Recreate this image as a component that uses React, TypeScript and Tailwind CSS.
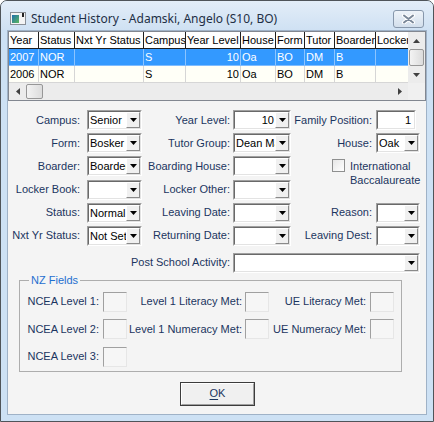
import React from "react";

// Student History dialog (Windows 7 basic look)

const GRID_COLS = [
    { key: "year", title: "Year", w: "w-[30px]" },
    { key: "status", title: "Status", w: "w-[36px]" },
    { key: "nxt", title: "Nxt Yr Status", w: "w-[69px]" },
    { key: "campus", title: "Campus", w: "w-[42px]" },
    { key: "level", title: "Year Level", w: "w-[55px]", right: true },
    { key: "house", title: "House", w: "w-[35px]" },
    { key: "form", title: "Form", w: "w-[29px]" },
    { key: "tutor", title: "Tutor", w: "w-[30px]" },
    { key: "boarder", title: "Boarder", w: "w-[41px]" },
    { key: "locker", title: "Locker", w: "w-[40px]" },
];

type Row = Record<string, string>;

const ROWS: Row[] = [
    { year: "2007", status: "NOR", nxt: "", campus: "S", level: "10", house: "Oa", form: "BO", tutor: "DM", boarder: "B", locker: "" },
    { year: "2006", status: "NOR", nxt: "", campus: "S", level: "10", house: "Oa", form: "BO", tutor: "DM", boarder: "B", locker: "" },
];

function Tri({ dir, color = "#000" }: { dir: "up" | "down" | "left" | "right"; color?: string }) {
    if (dir === "down")
        return (
            <svg width="7" height="4" viewBox="0 0 7 4">
                <path d="M0 0h7L3.5 4z" fill={color} />
            </svg>
        );
    if (dir === "up")
        return (
            <svg width="7" height="4" viewBox="0 0 7 4">
                <path d="M0 4h7L3.5 0z" fill={color} />
            </svg>
        );
    if (dir === "left")
        return (
            <svg width="4" height="7" viewBox="0 0 4 7">
                <path d="M4 0v7L0 3.5z" fill={color} />
            </svg>
        );
    return (
        <svg width="4" height="7" viewBox="0 0 4 7">
            <path d="M0 0v7L4 3.5z" fill={color} />
        </svg>
    );
}

function Combo({ w, value = "", right = false }: { w: string; value?: string; right?: boolean }) {
    return (
        <div className={`flex h-[20px] shrink-0 border border-t-[#a0a0a0] border-l-[#a0a0a0] border-r-white border-b-white ${w}`}>
            <div className="flex min-w-0 flex-1 border border-t-[#696969] border-l-[#696969] border-r-[#e3e3e3] border-b-[#e3e3e3] bg-white">
                <span
                    className={`min-w-0 flex-1 overflow-hidden whitespace-nowrap pl-[1px] leading-[16px] text-black ${
                        right ? "pr-[1px] text-right" : ""
                    }`}
                >
                    {value}
                </span>
                <div className="flex w-[14px] shrink-0 items-center justify-center border border-t-white border-l-white border-r-[#8a8a8a] border-b-[#8a8a8a] bg-[#f0f0f0]">
                    <Tri dir="down" />
                </div>
            </div>
        </div>
    );
}

function TextBox({ w, value = "" }: { w: string; value?: string }) {
    return (
        <div className={`flex h-[20px] shrink-0 border border-t-[#a0a0a0] border-l-[#a0a0a0] border-r-white border-b-white ${w}`}>
            <div className="flex-1 border border-t-[#696969] border-l-[#696969] border-r-[#e3e3e3] border-b-[#e3e3e3] bg-white pr-[3px] text-right leading-[16px] text-black">
                {value}
            </div>
        </div>
    );
}

function SmallBox() {
    return <div className="ml-[4px] h-[20px] w-[24px] shrink-0 border border-t-[#a0a0a0] border-l-[#a0a0a0] border-r-[#e6e6e6] border-b-[#e6e6e6] bg-[#f6f6f6]" />;
}

function Label({ w, text }: { w: string; text: string }) {
    return <div className={`shrink-0 whitespace-nowrap text-right leading-[13px] text-[#1b3560] ${w}`}>{text}</div>;
}

function WindowIcon() {
    return (
        <svg width="16" height="13" viewBox="0 0 16 13">
            <defs>
                <linearGradient id="ig" x1="0" y1="0" x2="1" y2="1">
                    <stop offset="0" stopColor="#1f6fae" />
                    <stop offset="1" stopColor="#5cb85c" />
                </linearGradient>
            </defs>
            <rect x="0.5" y="0.5" width="15" height="12" fill="#f4f4f4" stroke="#8a8f96" />
            <rect x="2" y="3" width="7" height="8" fill="url(#ig)" />
            <rect x="12" y="1" width="2" height="4" fill="#222" />
        </svg>
    );
}

function CloseGlyph() {
    return (
        <svg width="13" height="10" viewBox="0 0 13 10">
            <path d="M2 1.5L11 8.5M11 1.5L2 8.5" stroke="#ffffff" strokeWidth="4" strokeLinecap="round" />
            <path d="M2 1.5L11 8.5M11 1.5L2 8.5" stroke="#7b8899" strokeWidth="2" strokeLinecap="round" />
        </svg>
    );
}

function Thumb({ className }: { className: string }) {
    return <div className={`rounded-[2px] border border-[#979797] bg-gradient-to-r from-[#f3f3f3] to-[#dcdcdc] ${className}`} />;
}

function HistoryGrid() {
    return (
        <div className="flex h-[70px] flex-col border border-[#828790] bg-[#fffff7] text-black">
            <div className="flex h-[51px]">
                <div className="min-w-0 flex-1 overflow-hidden">
                    {/* header */}
                    <div className="flex h-[17px] w-[420px] border-b border-[#1f1f1f] bg-white">
                        {GRID_COLS.map((c) => (
                            <div key={c.key} className={`shrink-0 overflow-hidden whitespace-nowrap border-r border-[#1f1f1f] pl-[1px] leading-[16px] ${c.w}`}>
                                {c.title}
                            </div>
                        ))}
                    </div>
                    {ROWS.map((r, i) => (
                        <div
                            key={r.year}
                            className={`flex h-[17px] w-[420px] border-b ${
                                i === 0 ? "border-[#7fbcff] bg-[#3399ff] text-white" : "border-[#d6d6d6] bg-[#fffff7]"
                            }`}
                        >
                            {GRID_COLS.map((c) => (
                                <div
                                    key={c.key}
                                    className={`shrink-0 overflow-hidden whitespace-nowrap border-r px-[1px] leading-[16px] ${c.w} ${
                                        i === 0 ? "border-[#8cc4ff]" : "border-[#d6d6d6]"
                                    } ${c.right ? "text-right" : ""}`}
                                >
                                    {r[c.key]}
                                </div>
                            ))}
                        </div>
                    ))}
                </div>
                {/* vertical scrollbar */}
                <div className="flex w-[17px] shrink-0 flex-col bg-[#ececec]">
                    <div className="flex h-[17px] items-center justify-center">
                        <Tri dir="up" color="#404040" />
                    </div>
                    <Thumb className="mx-[1px] h-[17px]" />
                    <div className="flex flex-1 items-center justify-center">
                        <Tri dir="down" color="#404040" />
                    </div>
                </div>
            </div>
            {/* horizontal scrollbar */}
            <div className="flex h-[17px] bg-[#ececec]">
                <div className="flex w-[17px] shrink-0 items-center justify-center">
                    <Tri dir="left" color="#404040" />
                </div>
                <Thumb className="my-[1px] w-[17px] bg-gradient-to-b" />
                <div className="flex-1" />
                <div className="flex w-[17px] shrink-0 items-center justify-center">
                    <Tri dir="right" color="#404040" />
                </div>
                <div className="w-[17px] shrink-0 bg-[#f0f0f0]" />
            </div>
        </div>
    );
}

export default function App() {
    return (
        <div className="flex h-[422px] w-[434px] flex-col overflow-hidden rounded-t-[7px] border border-[#4f5459] bg-[#cde1f4] font-['Liberation_Sans',Arial,sans-serif] text-[11px]">
            {/* title bar */}
            <div className="flex h-[29px] shrink-0 items-center bg-gradient-to-b from-[#e3edf8] to-[#cfe1f3] pl-[9px] pr-[9px] pt-[6px]">
                <WindowIcon />
                <span className="ml-[5px] flex-1 whitespace-nowrap font-['Noto_Sans',sans-serif] text-[12px] leading-[16px] text-[#1e2f45]">
                    Student History - Adamski, Angelo (S10, BO)
                </span>
                <div className="flex h-[18px] w-[31px] items-center justify-center rounded-[3px] border border-[#8797ab] bg-gradient-to-b from-[#eef3f9] to-[#d3dfec]">
                    <CloseGlyph />
                </div>
            </div>

            {/* client area */}
            <div className="mx-[6px] mb-[6px] flex flex-1 flex-col border border-[#9fb2c7] bg-[#f4f4f4]">
                <HistoryGrid />

                <div className="mt-[9px] flex flex-col gap-[3.2px]">
                    <div className="flex h-[20px] items-center">
                        <Label w="w-[72px]" text="Campus:" />
                        <div className="ml-[7px]"><Combo w="w-[55px]" value="Senior" /></div>
                        <Label w="w-[88px]" text="Year Level:" />
                        <div className="ml-[3px]"><Combo w="w-[58px]" value="10" right /></div>
                        <Label w="w-[81px]" text="Family Position:" />
                        <div className="ml-[4px]"><TextBox w="w-[40px]" value="1" /></div>
                    </div>
                    <div className="flex h-[20px] items-center">
                        <Label w="w-[72px]" text="Form:" />
                        <div className="ml-[7px]"><Combo w="w-[55px]" value="Bosker" /></div>
                        <Label w="w-[88px]" text="Tutor Group:" />
                        <div className="ml-[3px]"><Combo w="w-[58px]" value="Dean Ma" /></div>
                        <Label w="w-[81px]" text="House:" />
                        <div className="ml-[4px]"><Combo w="w-[44px]" value="Oak" /></div>
                    </div>
                    <div className="flex h-[20px] items-center">
                        <Label w="w-[72px]" text="Boarder:" />
                        <div className="ml-[7px]"><Combo w="w-[55px]" value="Boarder" /></div>
                        <Label w="w-[88px]" text="Boarding House:" />
                        <div className="ml-[3px]"><Combo w="w-[58px]" /></div>
                        <div className="ml-[41px] flex h-[20px] items-start self-start pt-[3px]">
                            <div className="h-[13px] w-[13px] shrink-0 border border-[#8e8f8f] bg-gradient-to-br from-[#e6e6e6] to-white" />
                            <div className="ml-[5px] whitespace-nowrap leading-[14px] text-[#1b3560]">
                                International
                                <br />
                                Baccalaureate
                            </div>
                        </div>
                    </div>
                    <div className="flex h-[20px] items-center">
                        <Label w="w-[72px]" text="Locker Book:" />
                        <div className="ml-[7px]"><Combo w="w-[55px]" /></div>
                        <Label w="w-[88px]" text="Locker Other:" />
                        <div className="ml-[3px]"><Combo w="w-[58px]" /></div>
                    </div>
                    <div className="flex h-[20px] items-center">
                        <Label w="w-[72px]" text="Status:" />
                        <div className="ml-[7px]"><Combo w="w-[55px]" value="Normal" /></div>
                        <Label w="w-[88px]" text="Leaving Date:" />
                        <div className="ml-[3px]"><Combo w="w-[58px]" /></div>
                        <Label w="w-[81px]" text="Reason:" />
                        <div className="ml-[4px]"><Combo w="w-[44px]" /></div>
                    </div>
                    <div className="flex h-[20px] items-center">
                        <Label w="w-[72px]" text="Nxt Yr Status:" />
                        <div className="ml-[7px]"><Combo w="w-[55px]" value="Not Set" /></div>
                        <Label w="w-[88px]" text="Returning Date:" />
                        <div className="ml-[3px]"><Combo w="w-[58px]" /></div>
                        <Label w="w-[81px]" text="Leaving Dest:" />
                        <div className="ml-[4px]"><Combo w="w-[44px]" /></div>
                    </div>
                </div>

                <div className="mt-[7px] flex h-[20px] items-center">
                    <Label w="w-[222px]" text="Post School Activity:" />
                    <div className="ml-[3px]"><Combo w="w-[187px]" /></div>
                </div>

                {/* NZ Fields group */}
                <div className="relative ml-[11px] mt-[7px] flex h-[92px] w-[383px] flex-col gap-[7.5px] border border-[#adadad] pt-[11px]">
                    <span className="absolute left-[9px] top-[-8px] bg-[#f4f4f4] px-[2px] leading-[14px] text-[#1f6fd0]">NZ Fields</span>
                    <div className="flex h-[20px] items-center">
                        <Label w="w-[79px]" text="NCEA Level 1:" />
                        <SmallBox />
                        <Label w="w-[115px]" text="Level 1 Literacy Met:" />
                        <div className="-ml-[1px]"><SmallBox /></div>
                        <Label w="w-[97px]" text="UE Literacy Met:" />
                        <SmallBox />
                    </div>
                    <div className="flex h-[20px] items-center">
                        <Label w="w-[79px]" text="NCEA Level 2:" />
                        <SmallBox />
                        <Label w="w-[115px]" text="Level 1 Numeracy Met:" />
                        <div className="-ml-[1px]"><SmallBox /></div>
                        <Label w="w-[97px]" text="UE Numeracy Met:" />
                        <SmallBox />
                    </div>
                    <div className="flex h-[20px] items-center">
                        <Label w="w-[79px]" text="NCEA Level 3:" />
                        <SmallBox />
                    </div>
                </div>

                <div className="mt-[10px] flex justify-center">
                    <button className="ml-[1px] h-[24px] w-[75px] border border-[#3c3c3c] bg-[#f0f0f0] p-0">
                        <div className="flex h-full w-full items-center justify-center border border-t-white border-l-white border-r-[#a0a0a0] border-b-[#a0a0a0] leading-[13px] text-[#1b3560]">
                            <span className="underline underline-offset-2">O</span>K
                        </div>
                    </button>
                </div>
            </div>
        </div>
    );
}
